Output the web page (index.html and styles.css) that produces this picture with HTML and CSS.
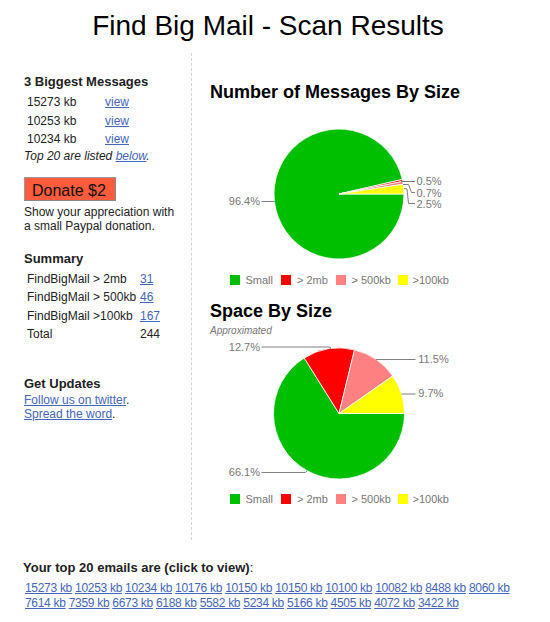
FILE: index.html
```html
<!DOCTYPE html>
<html>
<head>
<meta charset="utf-8">
<title>Find Big Mail - Scan Results</title>
<link rel="stylesheet" href="styles.css">
</head>
<body>
<h1 class="title">Find Big Mail - Scan Results</h1>
<div class="main">
  <div class="side">
    <h3 class="side-h">3 Biggest Messages</h3>
    <table class="big">
      <tr><td class="c1">15273 kb</td><td><a href="#">view</a></td></tr>
      <tr><td class="c1">10253 kb</td><td><a href="#">view</a></td></tr>
      <tr><td class="c1">10234 kb</td><td><a href="#">view</a></td></tr>
    </table>
    <p class="note">Top 20 are listed <a href="#top20">below</a>.</p>
    <button class="donate" type="button">Donate $2</button>
    <p class="appeal">Show your appreciation with<br>a small Paypal donation.</p>
    <h3 class="side-h summary-h">Summary</h3>
    <table class="sum">
      <tr><td class="c1">FindBigMail &gt; 2mb</td><td><a href="#">31</a></td></tr>
      <tr><td class="c1">FindBigMail &gt; 500kb</td><td><a href="#">46</a></td></tr>
      <tr><td class="c1">FindBigMail &gt;100kb</td><td><a href="#">167</a></td></tr>
      <tr><td class="c1">Total</td><td>244</td></tr>
    </table>
    <h3 class="side-h updates-h">Get Updates</h3>
    <p class="updates"><a href="#">Follow us on twitter</a>.<br><a href="#">Spread the word</a>.</p>
  </div>
  <div class="charts">
    <h2 class="chart-h">Number of Messages By Size</h2>
    <svg class="chart" width="357" height="198" viewBox="0 0 357 198">
      <g class="pie">
        <path fill="#00bf00" d="M147,91 L212,91 A65,65 0 1,1 210.34,76.43 Z"/>
        <path fill="#ff0000" d="M147,91 L210.34,76.43 A65,65 0 0,1 210.77,78.42 Z"/>
        <path fill="#ff8080" d="M147,91 L210.77,78.42 A65,65 0 0,1 211.26,81.24 Z"/>
        <path fill="#ffff00" d="M147,91 L211.26,81.24 A65,65 0 0,1 212,91 Z"/>
      </g>
      <g class="lead">
        <polyline points="69.5,98.5 82.5,98.5"/>
        <polyline points="209,78.5 223,78.5"/>
        <polyline points="211,81.5 216.5,81.5 219.5,89.5 223,89.5"/>
        <polyline points="212,85.5 215,86 216.5,100.5 223,100.5"/>
      </g>
      <g class="lbl">
        <text x="68" y="102" text-anchor="end">96.4%</text>
        <text x="224.5" y="82">0.5%</text>
        <text x="224.5" y="94">0.7%</text>
        <text x="224.5" y="105">2.5%</text>
      </g>
      <g class="legend">
        <rect x="38" y="172" width="10" height="10" fill="#00bf00"/>
        <text x="53.5" y="181">Small</text>
        <rect x="89" y="172" width="10" height="10" fill="#ff0000"/>
        <text x="105" y="181">&gt; 2mb</text>
        <rect x="144" y="172" width="10" height="10" fill="#ff8080"/>
        <text x="159.5" y="181">&gt; 500kb</text>
        <rect x="206" y="172" width="10" height="10" fill="#ffff00"/>
        <text x="220.5" y="181">&gt;100kb</text>
      </g>
    </svg>
    <h2 class="chart-h">Space By Size</h2>
    <div class="approx">Approximated</div>
    <svg class="chart" width="357" height="178" viewBox="0 0 357 178">
      <g class="pie">
        <path fill="#00bf00" d="M147,76.5 L212.5,76.5 A65.5,65.5 0 1,1 112.25,20.97 Z"/>
        <path fill="#ff0000" d="M147,76.5 L112.25,20.97 A65.5,65.5 0 0,1 162.49,12.86 Z"/>
        <path fill="#ff8080" d="M147,76.5 L162.49,12.86 A65.5,65.5 0 0,1 200.70,39.01 Z"/>
        <path fill="#ffff00" d="M147,76.5 L200.70,39.01 A65.5,65.5 0 0,1 212.5,76.5 Z"/>
      </g>
      <g class="lead">
        <polyline points="69.5,10 138,10 138.5,12"/>
        <polyline points="184,22.5 223.5,22.5"/>
        <polyline points="209.5,57 223.5,57"/>
        <polyline points="69.5,135.5 113.5,135.5 115.3,133.8"/>
      </g>
      <g class="lbl">
        <text x="68" y="14" text-anchor="end">12.7%</text>
        <text x="226.3" y="26.3">11.5%</text>
        <text x="226.3" y="60.3">9.7%</text>
        <text x="68" y="138.7" text-anchor="end">66.1%</text>
      </g>
      <g class="legend">
        <rect x="38" y="157" width="10" height="10" fill="#00bf00"/>
        <text x="53.5" y="166.3">Small</text>
        <rect x="89" y="157" width="10" height="10" fill="#ff0000"/>
        <text x="105" y="166.3">&gt; 2mb</text>
        <rect x="144" y="157" width="10" height="10" fill="#ff8080"/>
        <text x="159.5" y="166.3">&gt; 500kb</text>
        <rect x="206" y="157" width="10" height="10" fill="#ffff00"/>
        <text x="220.5" y="166.3">&gt;100kb</text>
      </g>
    </svg>
  </div>
</div>
<div class="top20" id="top20">
  <h3 class="top-h">Your top 20 emails are (click to view)<span class="colon">:</span></h3>
  <div class="links"><a href="#">15273 kb</a> <a href="#">10253 kb</a> <a href="#">10234 kb</a> <a href="#">10176 kb</a> <a href="#">10150 kb</a> <a href="#">10150 kb</a> <a href="#">10100 kb</a> <a href="#">10082 kb</a> <a href="#">8488 kb</a> <a href="#">8060 kb</a> <a href="#">7614 kb</a> <a href="#">7359 kb</a> <a href="#">6673 kb</a> <a href="#">6188 kb</a> <a href="#">5582 kb</a> <a href="#">5234 kb</a> <a href="#">5166 kb</a> <a href="#">4505 kb</a> <a href="#">4072 kb</a> <a href="#">3422 kb</a></div>
</div>
</body>
</html>
```

FILE: styles.css
```css
body {
  margin: 0;
  font-family: "Liberation Sans", Arial, sans-serif;
  font-size: 12px;
  color: #222;
  background: #fff;
}

a {
  color: #4466bb;
  text-decoration: underline;
}

.title {
  margin: 10px 0 0;
  padding-right: 14px;
  font-size: 28px;
  line-height: 32px;
  font-weight: normal;
  text-align: center;
  color: #000;
}

.main {
  display: flex;
  margin-top: 11px;
}

.side {
  flex: none;
  width: 168px;
  margin-left: 24px;
  box-sizing: border-box;
  padding-top: 21px;
  border-right: 1px dashed #d4d4d4;
}

.side-h {
  margin: 0;
  font-size: 13px;
  line-height: 15px;
  font-weight: bold;
}

.big,
.sum {
  border-collapse: collapse;
  margin-top: 4px;
  font-size: 12px;
  line-height: 18.5px;
}

.big td,
.sum td {
  padding: 0 0 0 3px;
  white-space: nowrap;
}

.big .c1 {
  width: 75px;
}

.sum .c1 {
  width: 110px;
}

.note {
  margin: 0;
  line-height: 14px;
  font-style: italic;
}

.donate {
  display: block;
  margin-top: 14px;
  width: 92px;
  height: 24px;
  box-sizing: border-box;
  padding: 3px 0 0 7px;
  border: 1px solid #9a9a9a;
  border-right-color: #8a8a8a;
  border-bottom-color: #8a8a8a;
  background: #ff5b3d;
  font-family: "Liberation Sans", Arial, sans-serif;
  font-size: 16px;
  line-height: 19px;
  color: #111;
  text-align: left;
}

.appeal {
  margin: 4px 0 0;
  line-height: 14px;
}

.summary-h {
  margin-top: 18px;
}

.updates-h {
  margin-top: 32px;
}

.updates {
  margin: 2px 0 0;
  line-height: 14px;
}

.charts {
  flex: 1;
  padding-top: 29px;
  padding-bottom: 25px;
}

.chart-h {
  margin: 0 0 0 18px;
  font-size: 18px;
  line-height: 21px;
  font-weight: bold;
  color: #000;
}

.approx {
  margin: 3px 0 0 18px;
  font-size: 10px;
  line-height: 12px;
  font-style: italic;
  color: #777;
}

.chart {
  display: block;
}

.pie path {
  stroke: #fff;
  stroke-width: 0.8;
}

.lead polyline {
  fill: none;
  stroke: #808080;
  stroke-width: 1;
}

.lbl text,
.legend text {
  font-family: "Liberation Sans", Arial, sans-serif;
  font-size: 11px;
  fill: #777;
}

.top20 {
  margin-top: 20px;
  padding-left: 23px;
}

.top-h {
  margin: 0;
  font-size: 13px;
  line-height: 15px;
  font-weight: bold;
}

.top-h .colon {
  font-weight: normal;
}

.links {
  margin-top: 6px;
  padding-left: 2px;
  line-height: 14.5px;
  letter-spacing: -0.3px;
}

.links a {
  white-space: nowrap;
}
```
